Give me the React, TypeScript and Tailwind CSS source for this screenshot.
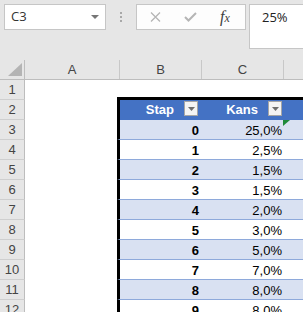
import React from "react";

const data: [string, string][] = [
  ["0", "25,0%"],
  ["1", "2,5%"],
  ["2", "1,5%"],
  ["3", "1,5%"],
  ["4", "2,0%"],
  ["5", "3,0%"],
  ["6", "5,0%"],
  ["7", "7,0%"],
  ["8", "8,0%"],
  ["9", "8,0%"],
];

function FilterButton() {
  return (
    <div className="mt-[1px] w-[14px] h-[15px] bg-[#f4f4f4] border border-[#a6a6a6] flex items-center justify-center shrink-0">
      <svg width="7" height="4" viewBox="0 0 7 4">
        <polygon points="0,0 7,0 3.5,4" fill="#6e6e6e" />
      </svg>
    </div>
  );
}

function RowHeader({ n }: { n: number }) {
  return (
    <div className="w-[25px] shrink-0 h-full bg-[#e6e6e6] border-r border-b border-r-[#bdbdbd] border-b-[#cfcfcf] flex items-center justify-center text-[13px] leading-[15px] text-[#444]">
      {n}
    </div>
  );
}

export default function App() {
  return (
    <div
      className="w-[303px] h-[312px] overflow-hidden bg-[#e6e6e6] flex flex-col"
      style={{ fontFamily: '"Liberation Sans", Arial, sans-serif' }}
    >
      {/* Toolbar */}
      <div className="h-[60px] shrink-0 flex items-start pt-[4px] pl-[4px]">
        <div
          className="w-[102px] h-[26px] shrink-0 bg-white border border-[#c6c6c6] flex items-center justify-between pl-[6px] pr-[6px] text-[13px] text-[#333]"
          style={{ fontFamily: '"Open Sans", "Noto Sans", sans-serif' }}
        >
          <span>C3</span>
          <svg width="8" height="4" viewBox="0 0 8 4">
            <polygon points="0,0 8,0 4,4" fill="#767676" />
          </svg>
        </div>
        <div className="ml-[14px] mt-[8px] flex flex-col gap-[2px] shrink-0">
          <div className="w-[2px] h-[2px] bg-[#a8a8a8]" />
          <div className="w-[2px] h-[2px] bg-[#a8a8a8]" />
          <div className="w-[2px] h-[2px] bg-[#a8a8a8]" />
        </div>
        <div className="ml-[14px] w-[110px] h-[26px] shrink-0 bg-[#fdfdfd] border border-[#c6c6c6] flex items-center pl-[13px] gap-[23px]">
          <svg width="11" height="10" viewBox="0 0 11 10">
            <path d="M1 0.5 L10 9.5 M10 0.5 L1 9.5" stroke="#b5b5b5" strokeWidth="1.3" fill="none" />
          </svg>
          <svg width="13" height="10" viewBox="0 0 13 10">
            <path d="M1 5 L4.5 8.5 L12 1" stroke="#b5b5b5" strokeWidth="2" fill="none" />
          </svg>
          <span
            className="italic text-[16px] leading-[16px] text-[#404040]"
            style={{ fontFamily: '"Liberation Serif", "Times New Roman", serif' }}
          >
            f<span className="text-[12px]">x</span>
          </span>
        </div>
        <div
          className="ml-[3px] flex-1 h-[45px] bg-white border border-r-0 border-[#c6c6c6] pl-[12px] pt-[3px] text-[13px] text-[#222]"
          style={{ fontFamily: '"Open Sans", "Noto Sans", sans-serif' }}
        >
          25%
        </div>
      </div>

      {/* Column headers */}
      <div className="h-[20px] shrink-0 flex border-b border-[#bdbdbd] text-[13px] leading-[15px] text-[#444]">
        <div className="w-[25px] shrink-0 border-r border-[#bdbdbd] relative">
          <svg className="absolute left-[8px] top-[3px]" width="14" height="13" viewBox="0 0 14 13">
            <polygon points="14,0 14,13 0,13" fill="#b4b4b4" />
          </svg>
        </div>
        <div className="w-[95px] shrink-0 border-r border-[#c8c8c8] flex items-center justify-center">A</div>
        <div className="w-[82px] shrink-0 border-r border-[#c8c8c8] flex items-center justify-center">B</div>
        <div className="w-[82px] shrink-0 border-r border-[#c8c8c8] flex items-center justify-center">C</div>
        <div className="flex-1" />
      </div>

      {/* Row 1 */}
      <div className="h-[20px] shrink-0 flex">
        <RowHeader n={1} />
        <div className="w-[92px] shrink-0 bg-white" />
        <div className="flex-1 bg-white border-b-[3px] border-black" />
      </div>

      {/* Row 2: table header */}
      <div className="h-[20px] shrink-0 flex">
        <RowHeader n={2} />
        <div className="w-[92px] shrink-0 bg-white" />
        <div className="w-[85px] shrink-0 border-l-[3px] border-black bg-[#4472c4] flex items-start justify-end pr-[4px] gap-[10px]">
          <span className="mt-[2px] text-[13px] leading-[15px] font-bold text-white">Stap</span>
          <FilterButton />
        </div>
        <div className="w-[82px] shrink-0 bg-[#4472c4] flex items-start justify-end pr-[2px] gap-[10px]">
          <span className="mt-[2px] text-[13px] leading-[15px] font-bold text-white">Kans</span>
          <FilterButton />
        </div>
        <div className="flex-1 bg-[#4472c4]" />
      </div>

      {/* Data rows */}
      {data.map(([stap, kans], i) => {
        const band = i % 2 === 0 ? "bg-[#d9e1f2]" : "bg-white";
        return (
          <div key={i} className="h-[20px] shrink-0 flex">
            <RowHeader n={i + 3} />
            <div className="w-[92px] shrink-0 bg-white" />
            <div
              className={`w-[85px] shrink-0 border-l-[3px] border-l-black border-b border-b-[#8ea9db] ${band} flex items-end justify-end pr-[3px] pb-[1px]`}
            >
              <span className="text-[13px] leading-[15px] font-bold text-black">{stap}</span>
            </div>
            <div
              className={`w-[82px] shrink-0 border-b border-[#8ea9db] ${band} flex items-end justify-end pr-[2px] pb-[1px]`}
            >
              <span className="text-[13px] leading-[15px] text-black">{kans}</span>
            </div>
            <div className={`flex-1 border-b border-[#8ea9db] ${band} relative`}>
              {i === 0 && (
                <svg className="absolute left-[-1px] top-0" width="7" height="6" viewBox="0 0 7 6">
                  <polygon points="0,0 7,0 0,6" fill="#1f8a3a" />
                </svg>
              )}
            </div>
          </div>
        );
      })}
    </div>
  );
}
